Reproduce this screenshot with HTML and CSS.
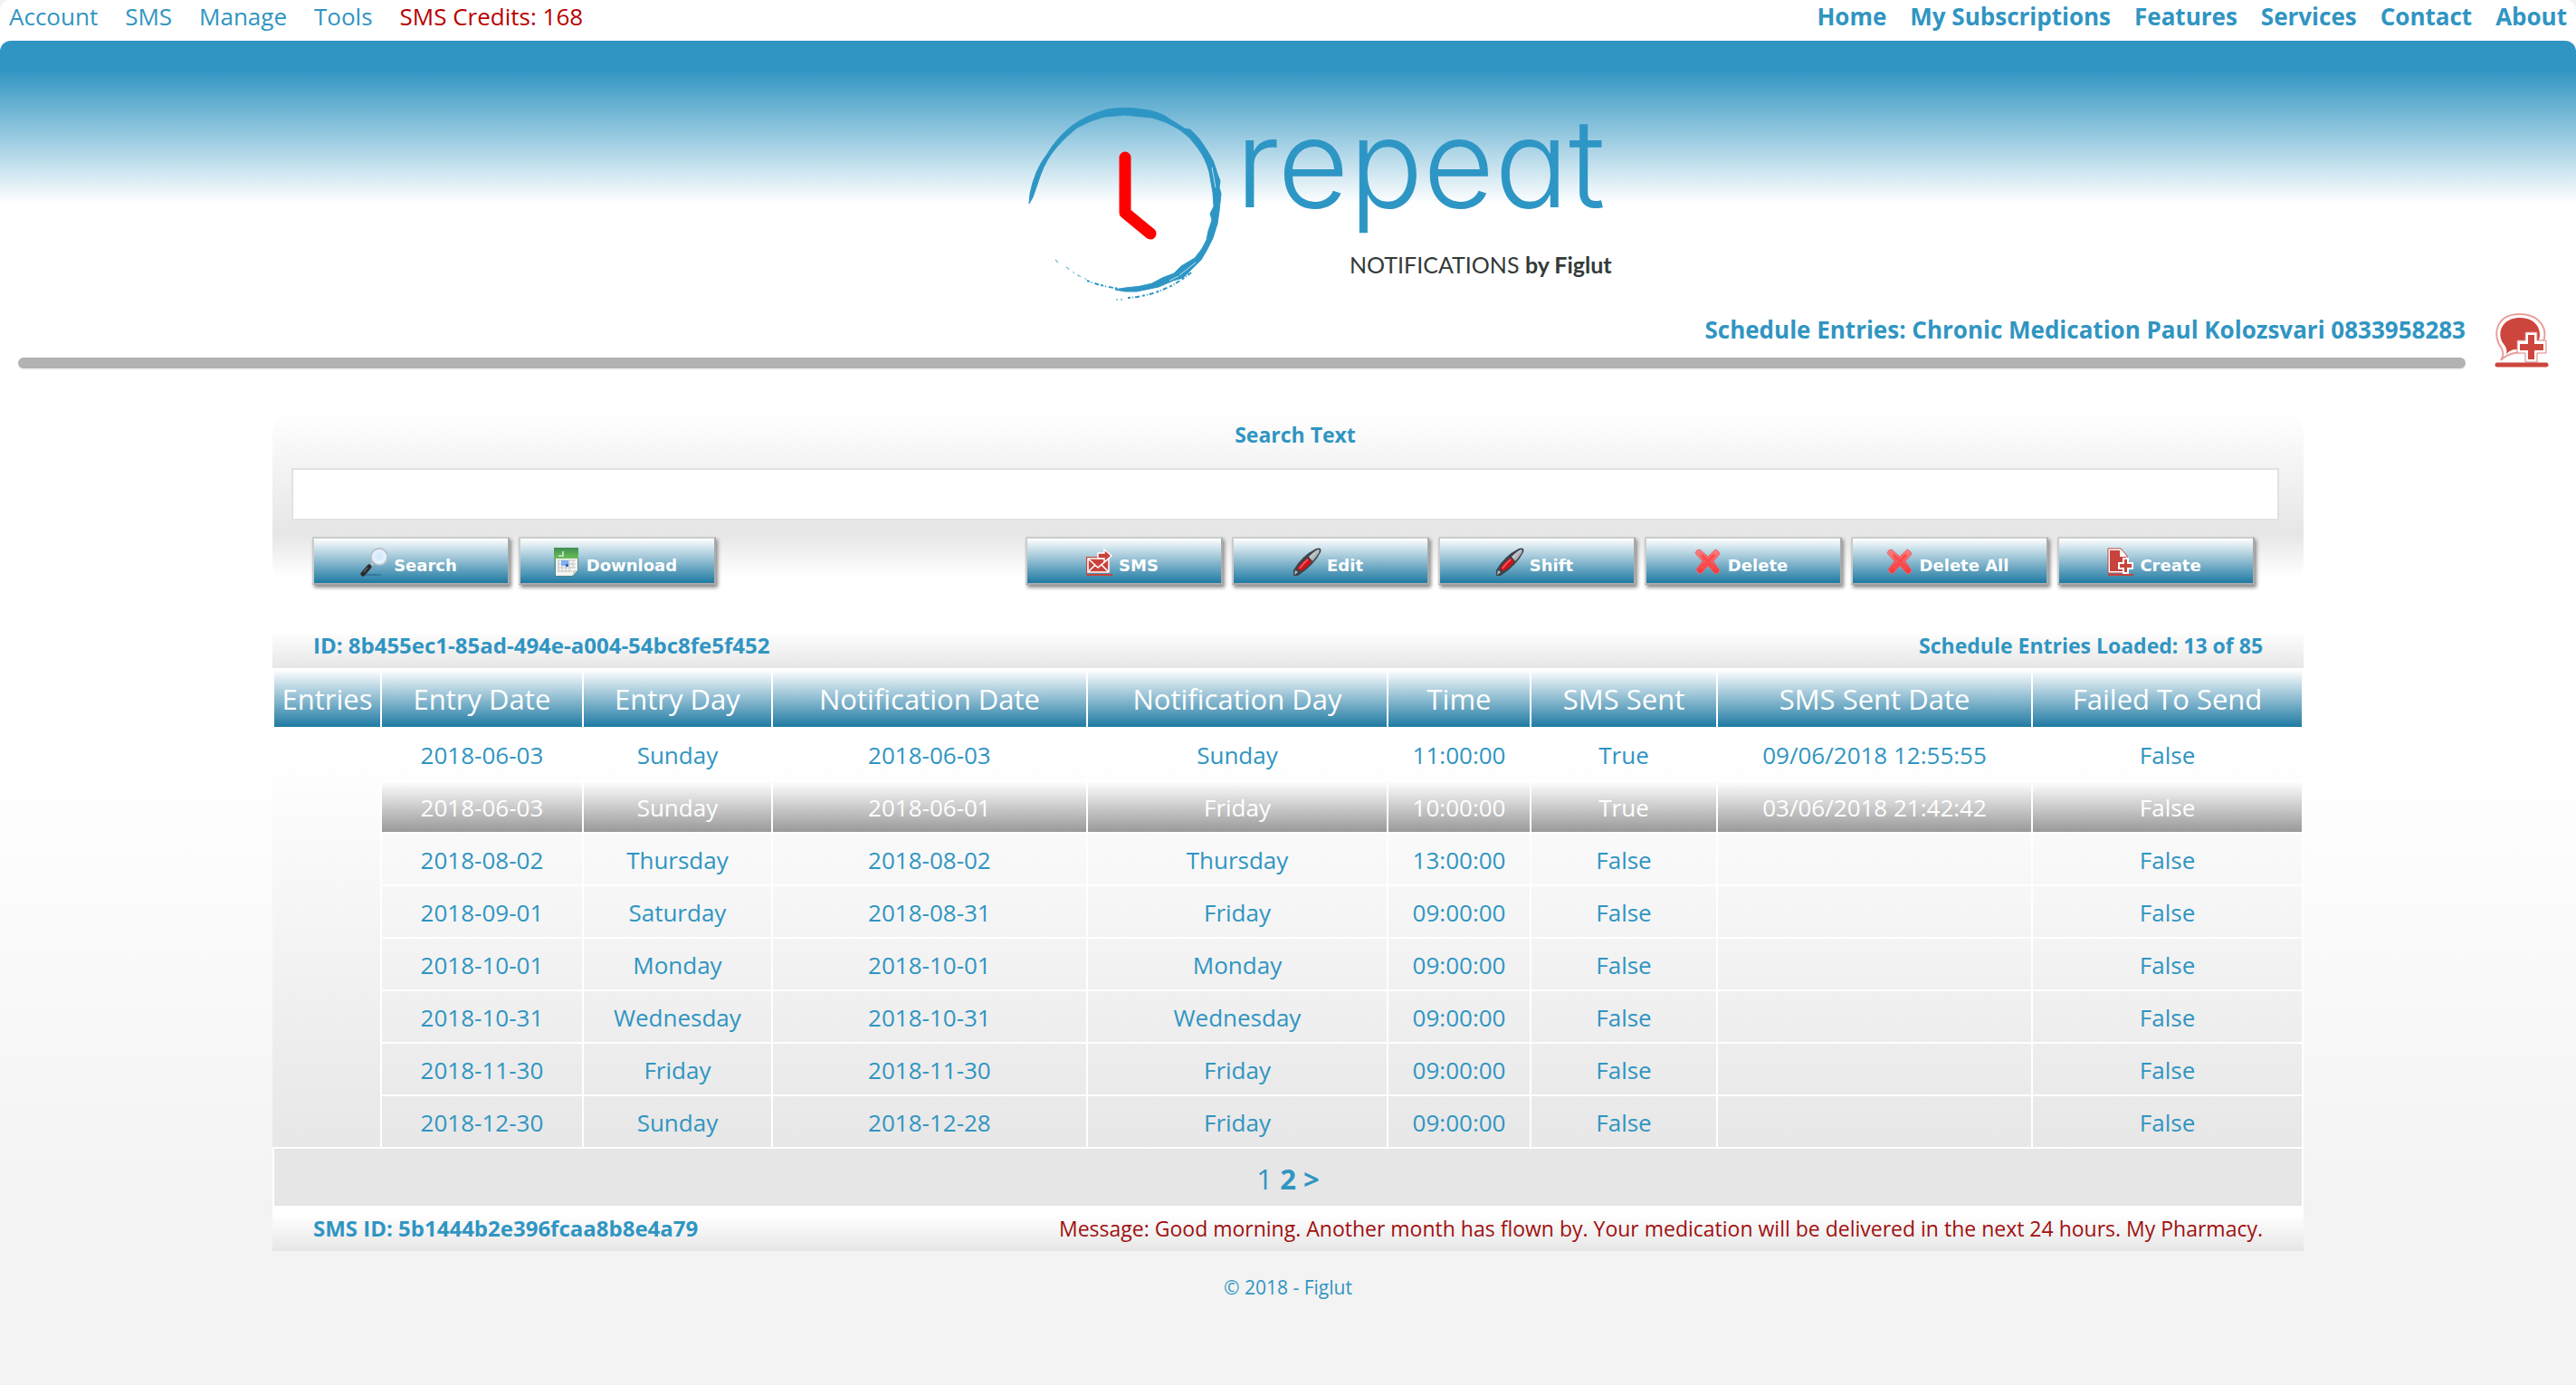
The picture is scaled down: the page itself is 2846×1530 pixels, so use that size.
FILE: index.html
```html
<!DOCTYPE html>
<html lang="en">
<head>
<meta charset="utf-8">
<meta name="viewport" content="width=device-width, initial-scale=1">
<title>Schedule Entries - Repeat Notifications</title>
<link rel="stylesheet" href="styles.css">
</head>
<body>
<svg class="sprite" aria-hidden="true">
  <defs>
    <linearGradient id="pen-metal" x1="0" y1="0" x2="1" y2="1"><stop offset="0" stop-color="#f2f2f2"/><stop offset="1" stop-color="#7f868c"/></linearGradient>
    <linearGradient id="cross-fill" x1="0" y1="0" x2="0" y2="1"><stop offset="0" stop-color="#ff8080"/><stop offset="1" stop-color="#ee3338"/></linearGradient>
    <linearGradient id="cal-head" x1="0" y1="0" x2="0" y2="1"><stop offset="0" stop-color="#3e8f52"/><stop offset="1" stop-color="#6abf55"/></linearGradient>
    <radialGradient id="lens-fill"><stop offset="0" stop-color="#cfe6fb"/><stop offset="1" stop-color="#eef7ff"/></radialGradient>
  </defs>
  <symbol id="i-search" viewBox="0 0 32 32">
    <ellipse cx="14" cy="30" rx="11" ry="1" fill="#1d5f80" opacity=".5"/>
    <path d="M15 17l-4 5" stroke="#b9c2c8" stroke-width="3"/>
    <path d="M11 21l-7 8" stroke="#2c2c2c" stroke-width="5" stroke-linecap="round"/>
    <path d="M9 22l-4 5" stroke="#8a8a8a" stroke-width="1"/>
    <circle cx="22" cy="10" r="9" fill="url(#lens-fill)" stroke="#b4c3ce" stroke-width="2"/>
  </symbol>
  <symbol id="i-calendar" viewBox="0 0 32 32">
    <path d="M2 1h27v24l-6 7H3z" fill="#4d7f7a" opacity=".7"/>
    <path d="M4 11h24v14l-6 6H4z" fill="#f4f4f2"/>
    <path d="M2 0h27v12H2z" fill="url(#cal-head)"/>
    <path d="M12 4v5H7" fill="none" stroke="#b8e0b4" stroke-width="2"/>
    <path d="M6 14h20M6 18h20M6 22h20M6 26h16M7 14v13M11 14v13M15 14v13M19 14v13M23 14v9" stroke="#c4c4c4" stroke-width="1"/>
    <path d="M10 14h8v6h-8z" fill="#7fb0f4"/><path d="M15 18h3v3h-3z" fill="#3565b4"/>
    <path d="M28 25h-5v6z" fill="#cfd3cf"/>
  </symbol>
  <symbol id="i-sms" viewBox="0 0 32 32">
    <path d="M2 10h26v18H2z" fill="#c8433c"/>
    <path d="M4 12h23v15H4zM4 12l11 10 12-10M4 27l8-8M27 27l-8-8" fill="none" stroke="#fff" stroke-width="1.6"/>
    <path d="M15 6h7V2l8 7-8 7v-4h-7z" fill="#c8433c" stroke="#fff" stroke-width="1.4"/>
    <path d="M2 30h29" stroke="#c8433c" stroke-width="2"/>
  </symbol>
  <symbol id="i-pen" viewBox="0 0 32 32">
    <path d="M1 31l0-6Q10 9 26 1q7-2 5 4-7 14-25 26z" fill="#3b454d"/>
    <path d="M18 10Q24 4 28 2q3 0 1 4-3 5-7 9z" fill="url(#pen-metal)"/>
    <path d="M17 11l4 5q-5 6-12 10l-4-3q5-7 12-12z" fill="#cf1219"/>
    <path d="M17 13q-6 5-9 10" stroke="#f2555a" stroke-width="2" fill="none"/>
    <path d="M3 25l3 2-4 3z" fill="#b9c0c4"/>
  </symbol>
  <symbol id="i-cross" viewBox="0 0 32 32">
    <path d="M7 2l9 8 8-8q4 1 5 5l-7 8 7 10q-1 4-5 4l-8-9-8 9q-4-1-5-5l7-9-8-9q1-4 5-4z" fill="url(#cross-fill)" stroke="#e26a72" stroke-width="1"/>
    <path d="M9 8l7 7 7-7M10 23l6-7 6 7" stroke="#ff4a4c" stroke-width="3" fill="none"/>
  </symbol>
  <symbol id="i-create" viewBox="0 0 32 32">
    <path d="M3 1h14l7 8v19H3z" fill="#fff" stroke="#c8433c" stroke-width="1"/>
    <path d="M5 3h11v7h7v16H5z" fill="#c8433c"/>
    <path d="M20 12h5v5h5v6h-5v5h-5v-5h-5v-6h5z" fill="#c8433c" stroke="#fff" stroke-width="2"/>
    <path d="M3 30h28" stroke="#c8433c" stroke-width="2"/>
  </symbol>
</svg>

<div class="page">
  <header>
    <div class="topbar">
      <nav class="menu" aria-label="Manage">
        <a href="#account">Account</a>
        <a href="#sms">SMS</a>
        <a href="#manage">Manage</a>
        <a href="#tools">Tools</a>
        <a href="#credits" class="credits">SMS Credits: 168</a>
      </nav>
      <nav class="menu menu-site" aria-label="Site">
        <a href="#home">Home</a>
        <a href="#subscriptions">My Subscriptions</a>
        <a href="#features">Features</a>
        <a href="#services">Services</a>
        <a href="#contact">Contact</a>
        <a href="#about">About</a>
      </nav>
    </div>

    <div class="banner">
      <svg class="logo" viewBox="0 0 734 230" role="img" aria-label="repeat NOTIFICATIONS by Figlut">
        <g fill="#2e96c5">
          <path stroke="#2e96c5" stroke-width="1" stroke-linejoin="round" d="M81 115L82 104Q87 78 101 60Q111 43 127 30Q144 17 167 11Q187 7 214 12Q228 15 237 22L253 32L259 33Q270 43 277 55Q286 68 289 82L292 90L291 97L293 104L291 123L289 137L284 153Q278 166 271 177L260 188L251 197L240 200L224 207L200 212L187 212L176 210L187 208Q204 207 217 203L228 197L241 192L249 184L264 175Q273 165 277 155L279 145L283 133L281 126L285 118L284 103L280 80Q276 65 267 53Q259 41 247 33Q233 24 217 20L187 17L164 19Q148 23 134 31Q120 42 111 53Q100 66 94 82L85 108Z"/>
        </g>
        <g fill="none" stroke="#2e96c5">
          <path d="M145 200q14 6 42 10" stroke-width="2" stroke-dasharray="3 2 1 3 5 2"/>
          <path d="M122 185q12 10 24 14" stroke-width="1" stroke-dasharray="4 5 2 4"/>
          <path d="M110 177l3 3" stroke-width="1"/>
          <path d="M190 219q40-3 70-28" stroke-width="2" stroke-dasharray="3 2 1 2 5 3"/>
          <path d="M177 221h8" stroke-width="1" stroke-dasharray="2 3"/>
        </g>
        <path d="M283 75l4 22M247 194l18-14M236 200l10-5" stroke="#fff" stroke-width="1" opacity=".7" fill="none"/>
        <path d="M187 64V125l28 23" fill="none" stroke="#f00" stroke-width="13" stroke-linecap="round" stroke-linejoin="round"/>
        <text class="logo-name" x="309" y="119">repeat</text>
        <text class="logo-tag" x="435" y="192">NOTIFICATIONS <tspan class="logo-by">by Figlut</tspan></text>
      </svg>

      <div class="title-row">
        <div class="title-block">
          <h1 class="title">Schedule Entries: Chronic Medication Paul Kolozsvari 0833958283</h1>
          <div class="rule"></div>
        </div>
        <svg class="chat-icon" viewBox="0 0 64 64" aria-hidden="true">
          <path d="M9 55c3-5 3-8 1-13C-1 28 3 4 30 4c23 0 32 18 25 32L30 46C21 47 13 50 9 55z" fill="#fff" stroke="#e9a09c" stroke-width="2"/>
          <path d="M15 48c1-5 0-7-3-11C4 27 9 8 30 8c18 0 26 14 20 27L27 43C21 43 18 45 15 48z" fill="#cc463e"/>
          <path d="M36 24h13v9h10v14H49v10H36V47H27V33h9z" fill="#fff" stroke="#e07f79" stroke-width="1" stroke-linejoin="round"/>
          <path d="M39 27h7v10h10v7H46v10h-7V44h-9v-7h9z" fill="#cc463e"/>
          <path d="M5 60h54" stroke="#cc463e" stroke-width="5" stroke-linecap="round"/>
        </svg>
      </div>
    </div>
  </header>

  <main class="content">
    <form class="search">
      <label class="search-label" for="search-text">Search Text</label>
      <input class="search-input" type="text" id="search-text" name="search-text">
      <div class="actions">
        <div class="group">
          <button class="btn" type="button"><svg class="icon"><use href="#i-search"/></svg>Search</button>
          <button class="btn" type="button"><svg class="icon"><use href="#i-calendar"/></svg>Download</button>
        </div>
        <div class="group">
          <button class="btn" type="button"><svg class="icon"><use href="#i-sms"/></svg>SMS</button>
          <button class="btn" type="button"><svg class="icon"><use href="#i-pen"/></svg>Edit</button>
          <button class="btn" type="button"><svg class="icon"><use href="#i-pen"/></svg>Shift</button>
          <button class="btn" type="button"><svg class="icon"><use href="#i-cross"/></svg>Delete</button>
          <button class="btn" type="button"><svg class="icon"><use href="#i-cross"/></svg>Delete All</button>
          <button class="btn" type="button"><svg class="icon"><use href="#i-create"/></svg>Create</button>
        </div>
      </div>
    </form>

    <div class="strip strip-top">
      <strong class="ident">ID: 8b455ec1-85ad-494e-a004-54bc8fe5f452</strong>
      <strong>Schedule Entries Loaded: 13 of 85</strong>
    </div>

    <table class="entries">
      <colgroup>
        <col class="c-entries"><col class="c-date"><col class="c-day"><col class="c-ndate"><col class="c-nday"><col class="c-time"><col class="c-sent"><col class="c-sdate"><col class="c-failed">
      </colgroup>
      <thead>
        <tr><th>Entries</th><th>Entry Date</th><th>Entry Day</th><th>Notification Date</th><th>Notification Day</th><th>Time</th><th>SMS Sent</th><th>SMS Sent Date</th><th>Failed To Send</th></tr>
      </thead>
      <tbody>
        <tr><td rowspan="8"></td><td>2018-06-03</td><td>Sunday</td><td>2018-06-03</td><td>Sunday</td><td>11:00:00</td><td>True</td><td>09/06/2018 12:55:55</td><td>False</td></tr>
        <tr class="selected"><td>2018-06-03</td><td>Sunday</td><td>2018-06-01</td><td>Friday</td><td>10:00:00</td><td>True</td><td>03/06/2018 21:42:42</td><td>False</td></tr>
        <tr><td>2018-08-02</td><td>Thursday</td><td>2018-08-02</td><td>Thursday</td><td>13:00:00</td><td>False</td><td></td><td>False</td></tr>
        <tr><td>2018-09-01</td><td>Saturday</td><td>2018-08-31</td><td>Friday</td><td>09:00:00</td><td>False</td><td></td><td>False</td></tr>
        <tr><td>2018-10-01</td><td>Monday</td><td>2018-10-01</td><td>Monday</td><td>09:00:00</td><td>False</td><td></td><td>False</td></tr>
        <tr><td>2018-10-31</td><td>Wednesday</td><td>2018-10-31</td><td>Wednesday</td><td>09:00:00</td><td>False</td><td></td><td>False</td></tr>
        <tr><td>2018-11-30</td><td>Friday</td><td>2018-11-30</td><td>Friday</td><td>09:00:00</td><td>False</td><td></td><td>False</td></tr>
        <tr><td>2018-12-30</td><td>Sunday</td><td>2018-12-28</td><td>Friday</td><td>09:00:00</td><td>False</td><td></td><td>False</td></tr>
      </tbody>
      <tfoot>
        <tr><td colspan="9">1 <a href="#page2">2</a> <a href="#next">&gt;</a></td></tr>
      </tfoot>
    </table>

    <div class="strip">
      <strong class="ident">SMS ID: 5b1444b2e396fcaa8b8e4a79</strong>
      <span class="message">Message: Good morning. Another month has flown by. Your medication will be delivered in the next 24 hours. My Pharmacy.</span>
    </div>
  </main>

  <footer class="footer">© 2018 - Figlut</footer>
</div>
</body>
</html>
```
FILE: styles.css
```css
* {
  box-sizing: border-box;
}

html {
  background: #f3f3f3;
}

body {
  margin: 0;
  color: #3095c2;
  font-family: "Segoe UI", "Open Sans", "Noto Sans", sans-serif;
  font-size: 26px;
}

a {
  color: inherit;
  text-decoration: none;
}

.sprite {
  position: absolute;
  width: 0;
  height: 0;
}

.page {
  min-height: 100vh;
  border-radius: 12px 12px 0 0;
  background: linear-gradient(#fff 55%, #f3f3f3 87%);
}

/* Top navigation */
.topbar {
  display: flex;
  justify-content: space-between;
  padding: 0 10px 9px;
}

.menu {
  display: flex;
  gap: 30px;
  line-height: 36px;
}

.menu-site {
  gap: 26px;
  font-weight: 700;
}

.credits {
  color: #b80000;
}

/* Banner */
.banner {
  padding-top: 65px;
  border-radius: 12px 12px 0 0;
  background: linear-gradient(#3095c2 0, #3095c2 32px, #fff 180px);
}

.logo {
  display: block;
  width: 734px;
  height: 230px;
  margin: 0 auto;
  overflow: visible;
}

.logo-name {
  fill: #2e96c5;
  font-family: "Inter", sans-serif;
  font-size: 136px;
  font-weight: 300;
  font-feature-settings: "cv11";
}

.logo-tag {
  fill: #333b38;
  font-family: "Lato", sans-serif;
  font-size: 25px;
}

.logo-by {
  font-weight: 700;
}

.title-row {
  display: flex;
  align-items: flex-end;
  gap: 30px;
  padding: 0 28px 0 20px;
}

.title-block {
  flex: 1;
}

.title {
  margin: 0 0 7px;
  font-size: 26px;
  line-height: 48px;
  text-align: right;
}

.rule {
  height: 12px;
  border-radius: 6px;
  background: #b2b2b2;
  box-shadow: 0 2px 0 #f3f3f3;
}

.chat-icon {
  width: 64px;
  height: 64px;
}

/* Search panel */
.content {
  width: 78.85%;
  margin: 48px auto 0;
}

.search {
  padding-top: 5px;
  border-radius: 24px;
  background: linear-gradient(#fff 0, #e6e6e6 135px, #fff 182px);
}

.search-label {
  display: block;
  padding-left: 16px;
  font-size: 23px;
  font-weight: 700;
  line-height: 40px;
  text-align: center;
}

.search-input {
  display: block;
  width: calc(100% - 48px);
  height: 58px;
  margin: 17px 27px 18px 21px;
  padding: 0 12px;
  border: 2px solid #e2e2e2;
  background: #fff;
  color: inherit;
  font: inherit;
}

.actions {
  display: flex;
  justify-content: space-between;
  padding: 0 54px 0 44px;
}

.group {
  display: flex;
  gap: 10px;
}

.btn {
  display: flex;
  align-items: flex-end;
  justify-content: center;
  gap: 6px;
  width: 218px;
  padding: 10px 6px 7px 0;
  border: 2px solid;
  border-color: #ccc #aaa #aaa #ccc;
  background: linear-gradient(#fff, #1f7aa3);
  box-shadow: 2px 3px 4px #888;
  color: #fff;
  font-family: "Verdana", "DejaVu Sans", sans-serif;
  font-size: 18px;
  font-weight: 700;
  line-height: 24px;
}

.icon {
  width: 32px;
  height: 32px;
}

/* Information strips above and below the table */
.strip {
  display: flex;
  justify-content: space-between;
  padding: 0 45px;
  background: linear-gradient(#fff 20%, #e6e6e6);
  font-size: 23px;
  line-height: 50px;
}

.strip-top {
  margin-top: 42px;
}

.ident {
  font-size: 24px;
}

.message {
  color: #a01010;
}

/* Entries table */
.entries {
  width: 100%;
  table-layout: fixed;
  border-collapse: separate;
  border-spacing: 0;
  background: linear-gradient(#fff 16%, #e6e6e6 92%);
  text-align: center;
}

.c-entries { width: 5.39%; }
.c-date { width: 9.94%; }
.c-day { width: 9.31%; }
.c-ndate { width: 15.51%; }
.c-nday { width: 14.8%; }
.c-time { width: 7.04%; }
.c-sent { width: 9.18%; }
.c-sdate { width: 15.51%; }
.c-failed { width: 13.32%; }

.entries th,
.entries td {
  padding: 0;
  border: 0 solid #fff;
  border-width: 0 2px 2px 0;
  background-clip: padding-box;
}

.entries th {
  height: 67px;
  border-top-width: 2px;
  background-image: linear-gradient(#fff, #1f7aa3);
  color: #fff;
  font-size: 31px;
  font-weight: 400;
}

.entries th:first-child {
  border-left-width: 2px;
}

.entries td {
  height: 58px;
  padding-top: 2px;
}

.entries .selected td {
  background-image: linear-gradient(#fff, #999);
  color: #fff;
}

.entries tfoot td {
  height: 63px;
  border-width: 0 2px;
  background-color: #e6e6e6;
  font-size: 31px;
}

.entries tfoot a {
  font-weight: 700;
}

.footer {
  padding: 24px 0;
  font-size: 21px;
  line-height: 32px;
  text-align: center;
}
```
